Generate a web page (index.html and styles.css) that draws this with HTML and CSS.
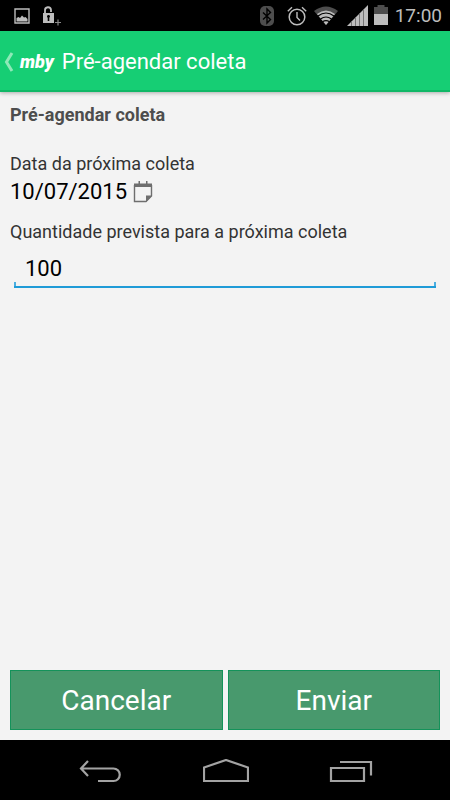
FILE: index.html
```html
<!DOCTYPE html>
<html lang="pt-BR">
<head>
    <meta charset="UTF-8">
    <meta name="viewport" content="width=device-width, initial-scale=1.0">
    <title>Pré-agendar coleta</title>
    <link rel="stylesheet" href="styles.css">
</head>
<body>
    <div class="status-bar">
        <div class="status-group notifications">
            <svg width="16" height="16" viewBox="0 0 16 16">
                <path d="M1 1h14v14H1z" fill="none" stroke="#bdbdbd" stroke-width="1.4"/>
                <path d="M2.500 13.500V10l2-1 1.500 1 2-2.500L10 9.500l1.500-.5 2 2v2.500z" fill="#bdbdbd"/>
            </svg>
            <svg width="20" height="20" viewBox="0 0 20 20">
                <path d="M3 8V4.500a3 3 0 0 1 6-.5v2" fill="none" stroke="#bdbdbd" stroke-width="1.800"/>
                <path d="M1 7h11v10H1z" fill="#bdbdbd"/>
                <path d="M5 10.500a1.500 1.500 0 1 1 2.300 1.200V15H5.700v-3.300A1.500 1.500 0 0 1 5 10.500z" fill="#000"/>
                <path d="M16 13.500v6M13 16.500h6" stroke="#8a8a8a" stroke-width="1.200"/>
            </svg>
        </div>
        <div class="status-group">
            <svg width="14" height="22" viewBox="0 0 14 22">
                <rect x="0" y="1" width="14" height="20" rx="5" fill="#4d4d4d"/>
                <path d="M3 7.500l7.500 7L7 18V4l3.500 3.500-7.500 7" fill="none" stroke="#000" stroke-width="1.400"/>
            </svg>
            <svg class="alarm" width="20" height="22" viewBox="0 0 20 22">
                <circle cx="10" cy="12" r="7.800" fill="none" stroke="#bdbdbd" stroke-width="1.500"/>
                <path d="M10 7v5.500l3 3M.800 6.300L5 2.300M19.200 6.300L15 2.300" fill="none" stroke="#bdbdbd" stroke-width="1.400"/>
            </svg>
            <svg width="24" height="22" viewBox="0 0 24 22">
                <path d="M0 6Q12-3 24 6L12 20z" fill="#4d4d4d"/>
                <path d="M3 9Q12 2 21 9L12 20z" fill="#bdbdbd"/>
                <path d="M4 11Q12 5 20 11M6.500 14Q12 10 17.500 14M8.500 16.700Q12 14.500 15.500 16.700" fill="none" stroke="#000" stroke-width="1.200"/>
            </svg>
            <svg class="signal" width="21" height="22" viewBox="0 0 21 22">
                <path d="M0 21L21 0v21z" fill="#bdbdbd"/>
                <path d="M4.500 16.500V21M8.500 12.500V21M12.500 8.500V21M16.500 4.500V21" stroke="#747474" stroke-width="1"/>
            </svg>
            <svg width="14" height="22" viewBox="0 0 14 22">
                <path d="M0 2h3.500V0h7v2H14v7H0z" fill="#4d4d4d"/>
                <path d="M0 9h14v11H0z" fill="#bdbdbd"/>
            </svg>
            <span class="clock">17:00</span>
        </div>
    </div>

    <header class="action-bar">
        <a href="#" class="up" aria-label="Voltar">
            <svg width="10" height="20" viewBox="0 0 10 20">
                <path d="M8 1L2.500 10 8 19" fill="none" stroke="#8ee9b8" stroke-width="3"/>
            </svg>
            <span class="logo">mby</span>
        </a>
        <h1>Pré-agendar coleta</h1>
    </header>

    <main class="content">
        <h2>Pré-agendar coleta</h2>

        <div class="field">
            <label for="data">Data da próxima coleta</label>
            <button type="button" class="date" id="data">
                10/07/2015
                <svg width="20" height="22" viewBox="0 0 20 22">
                    <path d="M1.500 4v16.500H13l5.500-5.500V4" fill="none" stroke="#6e6e6e" stroke-width="1.400"/>
                    <path d="M1 2.500h18v3.500H1zM5.500 0h1.500v3H5.500zM13 0h1.500v3H13zM13 21v-6.500h6z" fill="#6e6e6e"/>
                </svg>
            </button>
        </div>

        <div class="field">
            <label for="quantidade">Quantidade prevista para a próxima coleta</label>
            <input type="text" inputmode="numeric" id="quantidade" value="100">
        </div>

        <div class="actions">
            <button type="button">Cancelar</button>
            <button type="submit">Enviar</button>
        </div>
    </main>

    <nav class="nav-bar">
        <button type="button" aria-label="Voltar">
            <svg width="46" height="24" viewBox="0 0 46 24">
                <path d="M11 2L4 9.500 11 17M4 9.500h32.500a6 6 0 0 1 0 12.500H21" fill="none" stroke="#a3a3a3" stroke-width="2.200"/>
            </svg>
        </button>
        <button type="button" aria-label="Início">
            <svg width="46" height="24" viewBox="0 0 46 24">
                <path d="M1 22V8.500L23 1l22 7.500V22z" fill="none" stroke="#a3a3a3" stroke-width="2.200"/>
            </svg>
        </button>
        <button type="button" aria-label="Aplicativos recentes">
            <svg width="46" height="24" viewBox="0 0 46 24">
                <path d="M3 9h33v13H3zM12 3h31v13.500" fill="none" stroke="#a3a3a3" stroke-width="2.200"/>
            </svg>
        </button>
    </nav>
</body>
</html>
```
FILE: styles.css
```css
* {
    margin: 0;
    padding: 0;
    box-sizing: border-box;
}

body {
    font-family: Roboto, sans-serif;
    background: #f3f3f3;
    color: #333;
    min-height: 100vh;
    display: flex;
    flex-direction: column;
}

button, input {
    font-family: inherit;
    border: none;
    background: none;
    outline: none;
}

svg {
    display: block;
    flex-shrink: 0;
}

/* Barra de status */
.status-bar {
    height: 31px;
    padding: 0 8px 0 14px;
    background: #000;
    display: flex;
    justify-content: space-between;
    align-items: center;
}

.status-group {
    display: flex;
    align-items: center;
    gap: 6px;
}

.notifications {
    gap: 12px;
}

.alarm {
    margin: 0 1px 0 7px;
}

.signal {
    margin-left: 3px;
}

.clock {
    color: #bdbdbd;
    font-size: 19px;
    line-height: 24px;
    margin-left: 1px;
}

/* Barra de ação */
.action-bar {
    height: 61px;
    padding: 2px 4px 0;
    background: #16ce74;
    border-bottom: 2px solid #0fb866;
    box-shadow: 0 1px 4px rgba(0, 0, 0, 0.3);
    display: flex;
    align-items: center;
    gap: 8px;
}

.up {
    display: flex;
    align-items: center;
    gap: 6px;
    color: #fff;
    text-decoration: none;
}

.logo {
    font-size: 18px;
    line-height: 24px;
    font-weight: 900;
    font-style: italic;
}

h1 {
    color: #fff;
    font-size: 22px;
    line-height: 30px;
    font-weight: 400;
}

/* Formulário */
.content {
    flex: 1;
    padding: 11px 10px 10px;
    display: flex;
    flex-direction: column;
}

h2 {
    color: #4d4d4d;
    font-size: 18px;
    line-height: 24px;
    margin-bottom: 25px;
}

.field {
    display: flex;
    flex-direction: column;
    margin-bottom: 12px;
}

label {
    font-size: 18px;
    line-height: 24px;
}

.date {
    align-self: flex-start;
    display: flex;
    align-items: center;
    gap: 6px;
    color: #000;
    font-size: 22px;
    line-height: 32px;
}

input {
    height: 44px;
    margin: 0 4px;
    padding: 4px 11px 0;
    color: #000;
    font-size: 22px;
    background:
        linear-gradient(#1f9bd7, #1f9bd7) bottom / 100% 2px no-repeat,
        linear-gradient(#4aaee0, #4aaee0) left bottom / 2px 6px no-repeat,
        linear-gradient(#4aaee0, #4aaee0) right bottom / 2px 6px no-repeat;
}

.actions {
    margin-top: auto;
    display: flex;
    gap: 5px;
}

.actions button {
    flex: 1;
    height: 60px;
    background: #48996d;
    border: 1px solid #14925a;
    color: #fff;
    font-size: 28px;
}

/* Barra de navegação */
.nav-bar {
    height: 60px;
    padding: 2px 36px 0 37px;
    background: #000;
    display: flex;
}

.nav-bar button {
    flex: 1;
    display: flex;
    justify-content: center;
    align-items: center;
}
```
